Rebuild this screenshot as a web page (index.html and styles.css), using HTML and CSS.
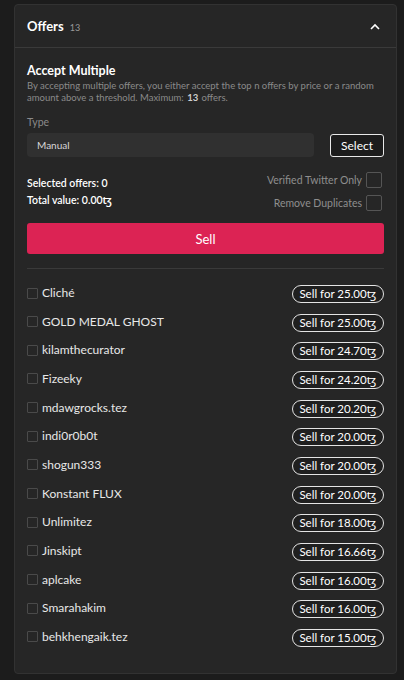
FILE: index.html
```html
<!DOCTYPE html>
<html>
<head>
<meta charset="utf-8">
<link rel="stylesheet" href="styles.css">
</head>
<body>
<div class="card">
  <div class="card-header">
    <div class="title">Offers <span class="count">13</span></div>
    <svg class="chev" width="10" height="7" viewBox="0 0 10 7"><path d="M1 6 L5 2 L9 6" fill="none" stroke="#fff" stroke-width="1.6"/></svg>
  </div>
  <div class="card-body">
    <h2 class="sub">Accept Multiple</h2>
    <p class="desc">By accepting multiple offers, you either accept the top n offers by price or a random amount above a threshold. Maximum: <b>13</b> offers.</p>
    <div class="label">Type</div>
    <div class="type-row">
      <div class="input">Manual</div>
      <button class="select-btn">Select</button>
    </div>
    <div class="stats-row">
      <div class="stats">
        <div>Selected offers: 0</div>
        <div>Total value: 0.00ꜩ</div>
      </div>
      <div class="opts">
        <label class="opt">Verified Twitter Only <span class="box"></span></label>
        <label class="opt">Remove Duplicates <span class="box"></span></label>
      </div>
    </div>
    <button class="sell">Sell</button>
    <div class="divider"></div>
    <ul class="list">
      <li><span class="name"><span class="cb"></span>Cliché</span><span class="pill">Sell for 25.00ꜩ</span></li>
      <li><span class="name"><span class="cb"></span>GOLD MEDAL GHOST</span><span class="pill">Sell for 25.00ꜩ</span></li>
      <li><span class="name"><span class="cb"></span>kilamthecurator</span><span class="pill">Sell for 24.70ꜩ</span></li>
      <li><span class="name"><span class="cb"></span>Fizeeky</span><span class="pill">Sell for 24.20ꜩ</span></li>
      <li><span class="name"><span class="cb"></span>mdawgrocks.tez</span><span class="pill">Sell for 20.20ꜩ</span></li>
      <li><span class="name"><span class="cb"></span>indi0r0b0t</span><span class="pill">Sell for 20.00ꜩ</span></li>
      <li><span class="name"><span class="cb"></span>shogun333</span><span class="pill">Sell for 20.00ꜩ</span></li>
      <li><span class="name"><span class="cb"></span>Konstant FLUX</span><span class="pill">Sell for 20.00ꜩ</span></li>
      <li><span class="name"><span class="cb"></span>Unlimitez</span><span class="pill">Sell for 18.00ꜩ</span></li>
      <li><span class="name"><span class="cb"></span>Jinskipt</span><span class="pill">Sell for 16.66ꜩ</span></li>
      <li><span class="name"><span class="cb"></span>aplcake</span><span class="pill">Sell for 16.00ꜩ</span></li>
      <li><span class="name"><span class="cb"></span>Smarahakim</span><span class="pill">Sell for 16.00ꜩ</span></li>
      <li><span class="name"><span class="cb"></span>behkhengaik.tez</span><span class="pill">Sell for 15.00ꜩ</span></li>
    </ul>
  </div>
</div>
</body>
</html>
```
FILE: styles.css
```css
html, body {
  margin: 0;
  padding: 0;
  background: #1c1c1c;
}
body {
  font-family: Lato, "Noto Sans", "DejaVu Sans", sans-serif;
  color: #fff;
  padding: 4px 7px 7px 14px;
}
.card {
  background: #262626;
  border: 1px solid #323232;
  border-radius: 4px;
  box-sizing: border-box;
  height: 670px;
}
.card-header {
  height: 42px;
  display: flex;
  align-items: center;
  justify-content: space-between;
  padding: 0 16px 0 12px;
  border-bottom: 1px solid #3a3a3a;
}
.title {
  font-size: 13px;
  font-weight: 700;
}
.count {
  font-size: 9px;
  font-weight: 400;
  color: #9a9a9a;
  margin-left: 3px;
}
.chev { display: block; }
.card-body {
  padding: 15px 12px 0 12px;
}
.sub {
  margin: 0;
  font-size: 12.5px;
  font-weight: 700;
  line-height: 16px;
}
.desc {
  margin: 1px 0 0;
  font-size: 9.5px;
  line-height: 12px;
  color: #8a8a8a;
}
.desc b { color: #cfcfcf; margin: 0 1px; }
.label {
  margin-top: 11px;
  font-size: 10.5px;
  color: #8a8a8a;
  line-height: 14px;
}
.type-row {
  display: flex;
  align-items: center;
  margin-top: 4px;
  gap: 16px;
}
.input {
  flex: 1;
  height: 24px;
  background: #303030;
  border-radius: 4px;
  font-size: 10px;
  color: #d8d8d8;
  display: flex;
  align-items: center;
  padding-left: 10px;
}
.select-btn {
  width: 54px;
  height: 23px;
  background: #1c1c1c;
  border: 1px solid #e8e8e8;
  border-radius: 3px;
  color: #fff;
  font-family: inherit;
  font-size: 12px;
  padding: 0;
}
.stats-row {
  display: flex;
  justify-content: space-between;
  margin-top: 15px;
}
.stats {
  font-size: 10.5px;
  font-weight: 600;
  line-height: 17px;
  padding-top: 3px;
}
.opts {
  display: flex;
  flex-direction: column;
  align-items: flex-end;
  gap: 7px;
}
.opt {
  display: flex;
  align-items: center;
  gap: 4px;
  font-size: 10.5px;
  color: #8e8e8e;
}
.box {
  width: 14px;
  height: 14px;
  border: 1px solid #555;
  border-radius: 2px;
  margin-right: 2px;
}
.sell {
  display: block;
  width: 100%;
  height: 31px;
  margin-top: 12px;
  background: #dc2354;
  border: none;
  border-radius: 3px;
  color: #fff;
  font-family: inherit;
  font-size: 13px;
}
.divider {
  height: 1px;
  background: #3a3a3a;
  margin-top: 14px;
}
.list {
  list-style: none;
  margin: 0;
  padding: 16px 0 0;
}
.list li {
  height: 28.67px;
  display: flex;
  justify-content: space-between;
  align-items: flex-start;
}
.name {
  display: flex;
  align-items: center;
  font-size: 12px;
  color: #e8e8e8;
  line-height: 14px;
  padding-top: 1px;
}
.cb {
  width: 9px;
  height: 9px;
  border: 1px solid #4a4a4a;
  border-radius: 1px;
  margin-right: 4px;
}
.pill {
  border: 1.5px solid #e4e4e4;
  border-radius: 10px;
  height: 16px;
  line-height: 16px;
  padding: 0 7px 0 6px;
  font-size: 11.5px;
  color: #fff;
  background: #1f1f1f;
}
```
